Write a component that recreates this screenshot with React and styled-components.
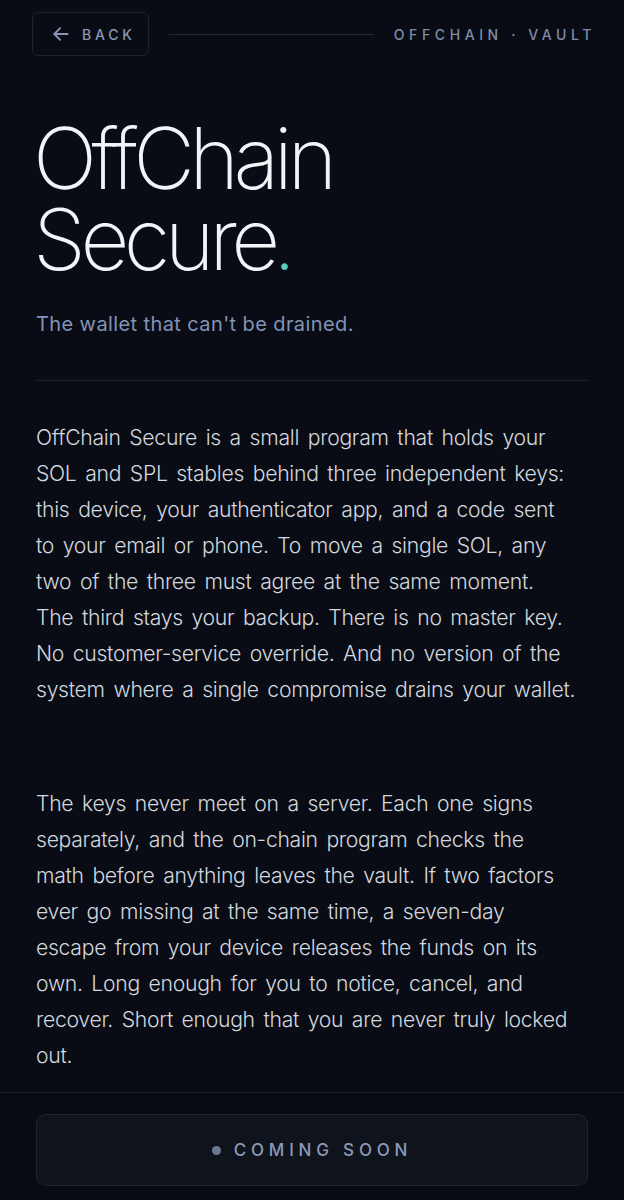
import React from 'react';
import styled, { createGlobalStyle } from 'styled-components';

const GlobalStyle = createGlobalStyle`
  html, body {
    margin: 0;
    padding: 0;
    background: #090c14;
  }
  * { box-sizing: border-box; }
`;

const Page = styled.div`
  height: 100vh;
  display: flex;
  flex-direction: column;
  background: #090c14;
  font-family: Inter, "Liberation Sans", sans-serif;
  overflow: hidden;
`;

const Scroll = styled.main`
  flex: 1;
  overflow: hidden;
  padding: 12px 36px 0;
`;

const TopBar = styled.header`
  display: flex;
  align-items: center;
  margin-left: -4px;
  margin-right: -4px;
  height: 44px;
`;

const BackButton = styled.button`
  display: flex;
  align-items: center;
  gap: 11px;
  height: 44px;
  padding: 0 12px 0 18px;
  background: transparent;
  border: 1px solid #1d2230;
  border-radius: 6px;
  color: #8a97b3;
  font-family: inherit;
  font-size: 14px;
  font-weight: 500;
  letter-spacing: 3.8px;
  cursor: pointer;
`;

const Rule = styled.div`
  flex: 1;
  height: 1px;
  background: #222838;
  margin: 0 20px 0 20px;
`;

const Brand = styled.span`
  color: #7f8ca8;
  font-size: 14px;
  font-weight: 500;
  letter-spacing: 4.6px;
  margin-right: -4px;
`;

const Title = styled.h1`
  margin: 62px 0 0 -3px;
  font-size: 85px;
  line-height: 81px;
  font-weight: 200;
  letter-spacing: -5.5px;
  color: #f2f4f8;
`;

const Dot = styled.span`
  color: #55d0bf;
  margin-left: -2px;
`;

const Tagline = styled.p`
  margin: 32px 0 0;
  font-size: 20px;
  color: #8293b8;
  font-weight: 400;
  letter-spacing: 0.4px;
`;

const Divider = styled.hr`
  border: none;
  height: 1px;
  background: #1c2130;
  margin: 44px 0 0;
`;

const Body = styled.p`
  margin: ${(p) => (p.first ? '38px' : '78px')} 0 0;
  font-size: 21.2px;
  line-height: 36px;
  font-weight: 300;
  color: #d3d7df;
  letter-spacing: -0.3px;
  word-spacing: 3px;
`;

const Footer = styled.footer`
  border-top: 1px solid #1c2130;
  padding: 21px 36px 14px;
  background: #080b12;
`;

const SoonButton = styled.div`
  height: 72px;
  border: 1px solid #1f2433;
  border-radius: 10px;
  background: #0f131c;
  display: flex;
  align-items: center;
  justify-content: center;
  gap: 13px;
  color: #8c9ab8;
  font-size: 17px;
  font-weight: 500;
  letter-spacing: 4.8px;
`;

const Pip = styled.span`
  width: 9px;
  height: 9px;
  border-radius: 50%;
  background: #6b7891;
`;

const ArrowLeft = () => (
  <svg width="20" height="20" viewBox="0 0 24 24" fill="none" stroke="currentColor" strokeWidth="2.2" strokeLinecap="round" strokeLinejoin="round">
    <path d="M20 12H4" />
    <path d="M11 19l-7-7 7-7" />
  </svg>
);

const paragraphs = [
  [
    'OffChain Secure is a small program that holds your',
    'SOL and SPL stables behind three independent keys:',
    'this device, your authenticator app, and a code sent',
    'to your email or phone. To move a single SOL, any',
    'two of the three must agree at the same moment.',
    'The third stays your backup. There is no master key.',
    'No customer-service override. And no version of the',
    'system where a single compromise drains your wallet.',
  ],
  [
    'The keys never meet on a server. Each one signs',
    'separately, and the on-chain program checks the',
    'math before anything leaves the vault. If two factors',
    'ever go missing at the same time, a seven-day',
    'escape from your device releases the funds on its',
    'own. Long enough for you to notice, cancel, and',
    'recover. Short enough that you are never truly locked',
    'out.',
  ],
];

const App = () => {
  return (
    <Page>
      <GlobalStyle />
      <Scroll>
        <TopBar>
          <BackButton>
            <ArrowLeft />
            BACK
          </BackButton>
          <Rule />
          <Brand>OFFCHAIN · VAULT</Brand>
        </TopBar>

        <Title>
          OffChain
          <br />
          Secure<Dot>.</Dot>
        </Title>
        <Tagline>The wallet that can't be drained.</Tagline>
        <Divider />

        {paragraphs.map((lines, i) => (
          <Body key={i} first={i === 0}>
            {lines.map((line, j) => (
              <React.Fragment key={j}>
                {line}
                {j < lines.length - 1 && <br />}
              </React.Fragment>
            ))}
          </Body>
        ))}
      </Scroll>

      <Footer>
        <SoonButton>
          <Pip />
          COMING SOON
        </SoonButton>
      </Footer>
    </Page>
  );
};

export default App;
